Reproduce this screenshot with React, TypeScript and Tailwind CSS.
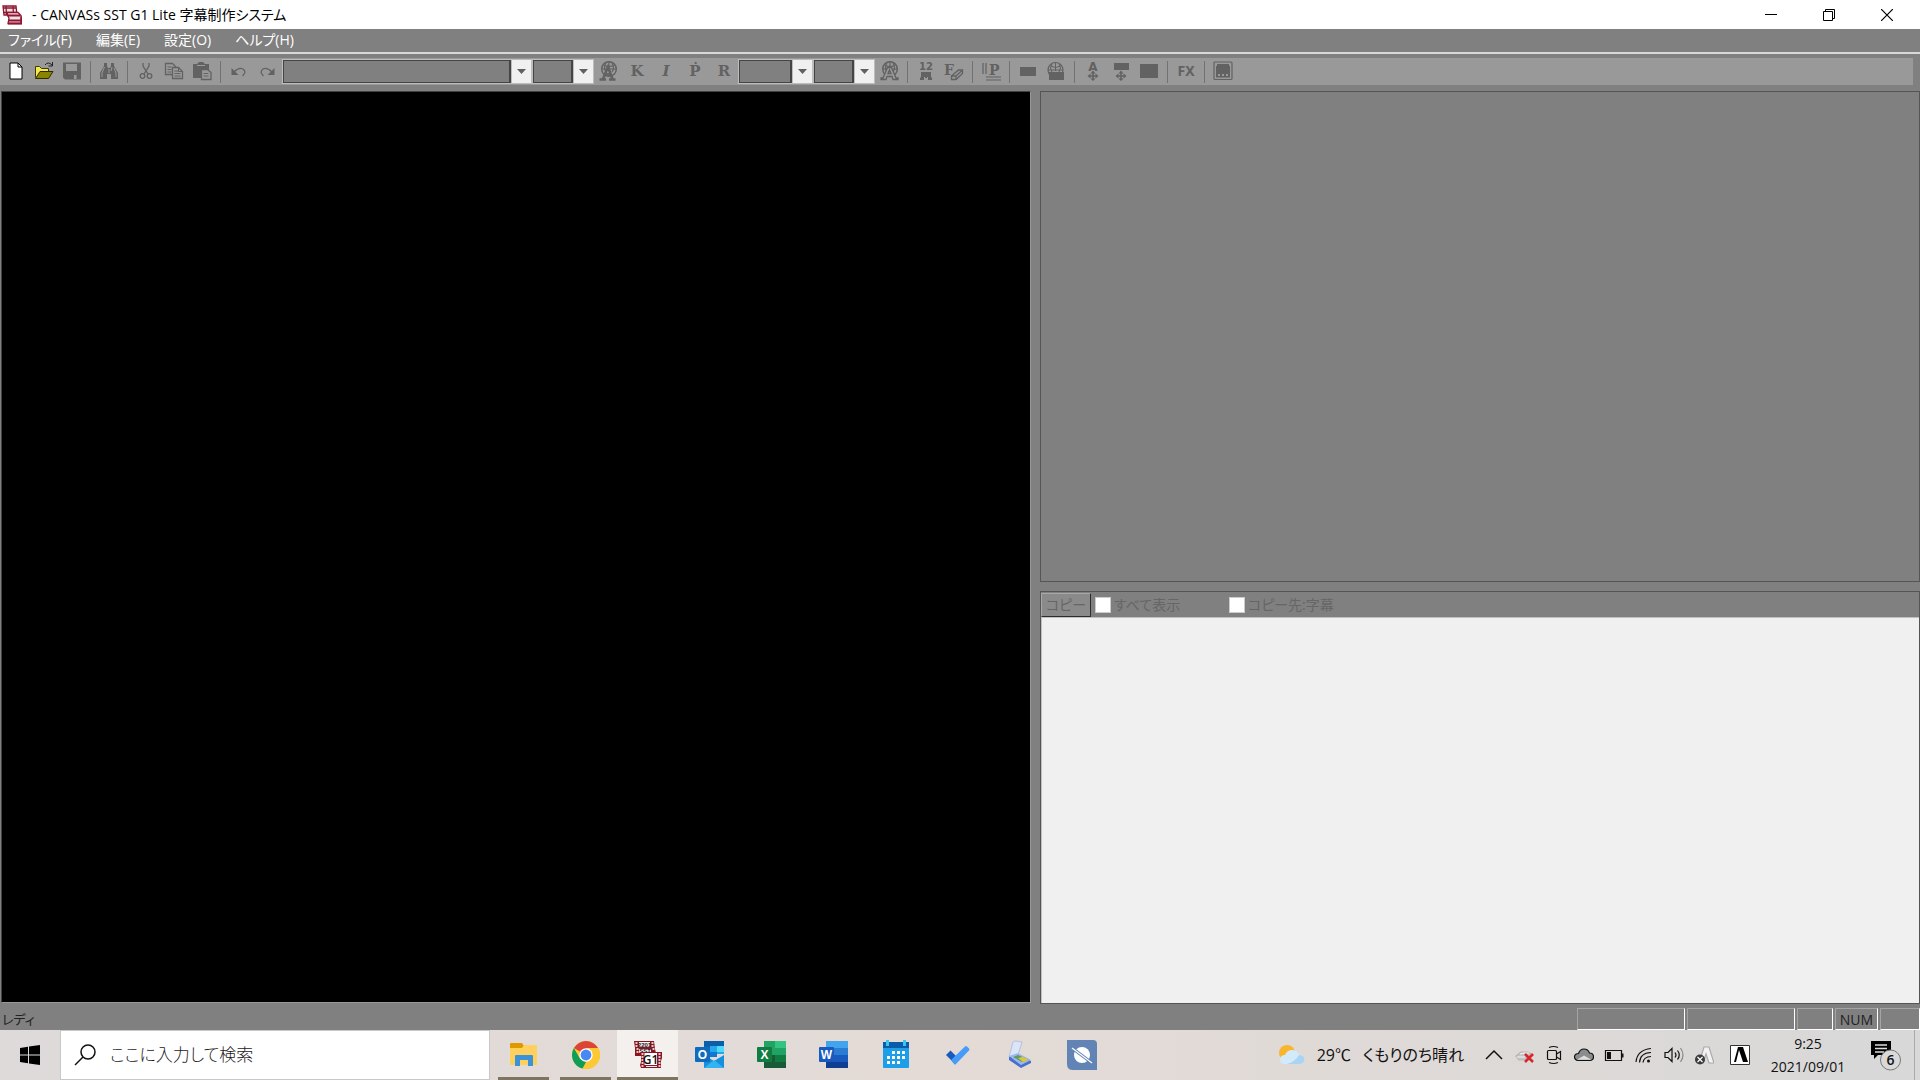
import type { ReactNode } from "react";

const menus = ["ファイル(F)", "編集(E)", "設定(O)", "ヘルプ(H)"];

/* ---------- toolbar pieces ---------- */

function Tool({ label, children }: { label: string; children: ReactNode }) {
  return (
    <button type="button" aria-label={label} className="flex h-6 w-7 shrink-0 items-center justify-center pb-0.5 text-[#626262]">
      {children}
    </button>
  );
}

function Sep() {
  return (
    <div className="flex w-[9px] shrink-0 justify-center">
      <div className="h-[22px] w-px bg-[#727272]" />
    </div>
  );
}

function Combo({ label, width }: { label: string; width: string }) {
  return (
    <div className={`flex h-[25px] shrink-0 border border-[#bdbdbd] bg-[#bdbdbd] ${width}`}>
      <select
        aria-label={label}
        disabled
        className="min-w-0 flex-1 appearance-none border border-r-2 border-[#444] bg-[#808080] opacity-100"
      />
      <span className="ml-px flex w-[19px] items-center justify-center bg-[#f0f0f0]">
        <svg width="9" height="5" viewBox="0 0 9 5" fill="#606060">
          <path d="M0 0h9L4.500 5z" />
        </svg>
      </span>
    </div>
  );
}

function Icon({ children, size = 20 }: { children: ReactNode; size?: number }) {
  return (
    <svg width={size} height={size} viewBox="0 0 20 20" fill="none" stroke="currentColor" strokeWidth="1.500">
      {children}
    </svg>
  );
}

const serif = "'DejaVu Serif', serif";
const sans = "'Liberation Sans', sans-serif";

function Letter({ children, italic }: { children: string; italic?: boolean }) {
  return (
    <span className={`font-['DejaVu_Serif',serif] text-[15px] leading-5 font-bold ${italic ? "italic" : ""}`}>{children}</span>
  );
}

function GlobeA({ solid }: { solid?: boolean }) {
  return (
    <Icon>
      <circle cx="11" cy="8" r="7.300" />
      <path d="M4 8h14M11 1v9M5.500 4q5.500 3 11 0M8 2q-3 5 0 9M14 2q3 5 0 9" strokeWidth="1.200" />
      {solid ? (
        <path d="M5 18l5-12 4.500 12M7 13.500h6M1.500 18.500h6.500M11 18.500h6.500" strokeWidth="2.600" />
      ) : (
        <path d="M2 18.500h5l1-3h5l1 3h5v-1.500h-2L12.500 6.500h-4L4 17H2zM9 12.500l1.500-3.500 1.500 3.500z" fill="#999" strokeWidth="1.300" />
      )}
    </Icon>
  );
}

function Move({ y }: { y: number }) {
  return (
    <path
      d={`M10 ${y - 5.5}l2.500 3h-1.700v1.700h1.700v-1.700L15.500 ${y}l-3 2.500v-1.700h-1.700v1.700h1.700L10 ${y + 5}l-2.500-2.500h1.700v-1.700h-1.700v1.700L4.500 ${y}l3-2.500v1.700h1.700v-1.700h-1.700z`}
      fill="currentColor"
      stroke="none"
    />
  );
}

function Toolbar() {
  return (
    <div className="flex h-[27px] items-center bg-[#999] pl-0.5">
      <Tool label="新規作成">
        <Icon>
          <path d="M4 2h8l4 4v12H4z" fill="#fff" stroke="#000" strokeWidth="1" />
          <path d="M12 2v4h4" stroke="#000" strokeWidth="1" />
        </Icon>
      </Tool>
      <Tool label="開く">
        <Icon>
          <path d="M1.500 16.500v-11h4l2 2h7v3" fill="#f4ea50" stroke="#3c3c00" strokeWidth="1" />
          <path d="M1.500 17.500l4.500-7h13l-4.500 7z" fill="#8a8400" stroke="#2c2c00" strokeWidth="1" />
          <path d="M11 4q3-4 7 0M18.500 1v4h-4" stroke="#222" strokeWidth="1" />
        </Icon>
      </Tool>
      <Tool label="保存">
        <Icon>
          <path d="M1 1.500h18v17H3l-2-2z" fill="currentColor" stroke="none" />
          <path d="M4 3h11v7H4zM12 14h2.500v4H12z" fill="#999" stroke="none" />
        </Icon>
      </Tool>
      <Sep />
      <Tool label="検索">
        <Icon>
          <path d="M5 2h3v3l1 2h2l1-2V2h3v3l4 7v6h-7v-5H8v5H1v-6l4-7z" fill="currentColor" stroke="none" />
          <path d="M5.500 6L3 12v4M13 6l-1 4M15 7l2 5v4M10 8v4" stroke="#999" strokeWidth="1" />
        </Icon>
      </Tool>
      <Sep />
      <Tool label="切り取り">
        <Icon>
          <path d="M7 2v3l5 8M13 2v3l-5 8" strokeWidth="1.300" />
          <circle cx="6.500" cy="15" r="2.300" strokeWidth="1.300" />
          <circle cx="13.500" cy="15" r="2.300" strokeWidth="1.300" />
        </Icon>
      </Tool>
      <Tool label="コピー">
        <Icon>
          <path d="M1.500 2.500h7l3 3v8h-10z" strokeWidth="1.300" />
          <path d="M8.500 6.500h6l4 4v7h-10z" fill="#999" strokeWidth="1.300" />
          <path d="M3.500 6h4M3.500 8.500h4M3.500 11h4M10.500 10h4M10.500 12.500h6M10.500 15h6M14.500 6.500v4h4" strokeWidth="1" />
        </Icon>
      </Tool>
      <Tool label="貼り付け">
        <Icon>
          <path d="M1 3h4l2-2h4l2 2h4v14H1z" fill="currentColor" stroke="none" />
          <path d="M5 4.500h8" stroke="#999" strokeWidth="1" />
          <path d="M9.500 8.500h6l3.500 3v7H9.500z" fill="#999" strokeWidth="1.300" />
          <path d="M11.500 12.500h5M11.500 15h5" strokeWidth="1" />
        </Icon>
      </Tool>
      <Sep />
      <Tool label="元に戻す">
        <Icon>
          <path d="M5 11q5-5 9-3 4 3-.5 7" strokeWidth="1.300" />
          <path d="M2.500 7v7h7z" fill="currentColor" stroke="none" />
        </Icon>
      </Tool>
      <Tool label="やり直し">
        <Icon>
          <path d="M15 11q-5-5-9-3-4 3 .5 7" strokeWidth="1.300" />
          <path d="M17.500 7v7h-7z" fill="currentColor" stroke="none" />
        </Icon>
      </Tool>
      <div className="w-px" />
      <Combo label="フォント" width="w-[250px]" />
      <Combo label="サイズ" width="w-[62px]" />
      <div className="flex gap-px">
        <Tool label="文字色">
          <GlobeA solid />
        </Tool>
        <Tool label="太字">
          <Letter>K</Letter>
        </Tool>
        <Tool label="斜体">
          <Letter italic>I</Letter>
        </Tool>
        <Tool label="傍点">
          <Letter>Ṗ</Letter>
        </Tool>
        <Tool label="ルビ">
          <Letter>R</Letter>
        </Tool>
      </div>
      <Combo label="縁の種類" width="w-[75px]" />
      <Combo label="縁の幅" width="w-[62px]" />
      <Tool label="縁の色">
        <GlobeA />
      </Tool>
      <Sep />
      <Tool label="縦中横">
        <Icon>
          <text x="10" y="9" textAnchor="middle" fontSize="10" fontWeight="700" fontFamily="DejaVu Sans, sans-serif" fill="currentColor" stroke="none">12</text>
          <path d="M5 11h10v5l1 1v2h-4v-3h-1v1H9v-1H8v3H4v-2l1-1z" fill="currentColor" stroke="none" />
        </Icon>
      </Tool>
      <Tool label="書式消去">
        <Icon>
          <text x="0" y="14" fontSize="14" fontWeight="700" fontFamily={serif} fill="currentColor" stroke="none">F</text>
          <path d="M7.500 15l7-6h4v3.500l-6.500 6H7.500z" fill="#999" strokeWidth="1.400" />
          <path d="M7.500 15H12v3.500M12 15l6.500-6" strokeWidth="1.300" />
        </Icon>
      </Tool>
      <Sep />
      <Tool label="文字配置">
        <Icon>
          <path d="M2 2v11M5 2v11M5 16h15M5 19h15" strokeWidth="1.200" />
          <text x="8" y="14" fontSize="14" fontWeight="700" fontFamily={serif} fill="currentColor" stroke="none">P</text>
        </Icon>
      </Tool>
      <Sep />
      <Tool label="座布団">
        <Icon>
          <path d="M2 6h16v9H2z" fill="currentColor" stroke="none" />
        </Icon>
      </Tool>
      <Tool label="座布団の色">
        <Icon>
          <circle cx="9.500" cy="9" r="7.500" strokeWidth="1.200" />
          <path d="M2 9h15M9.500 1v9M4 5q6 3 11 0M6 3q-3 4 0 8M13 3q3 4 0 8" strokeWidth="1" />
          <path d="M3 11h15v8H3z" fill="currentColor" stroke="none" />
        </Icon>
      </Tool>
      <Sep />
      <Tool label="文字移動">
        <Icon>
          <text x="10" y="10" textAnchor="middle" fontSize="12" fontWeight="700" fontFamily="DejaVu Sans, sans-serif" fill="currentColor" stroke="none">A</text>
          <Move y={15} />
        </Icon>
      </Tool>
      <Tool label="座布団移動">
        <Icon>
          <path d="M3 2h15v7H3z" fill="currentColor" stroke="none" />
          <Move y={15} />
        </Icon>
      </Tool>
      <Tool label="画面枠">
        <Icon>
          <path d="M1 3h18v14H1z" fill="currentColor" stroke="none" />
        </Icon>
      </Tool>
      <Sep />
      <Tool label="効果">
        <span className="font-['Noto_Sans',sans-serif] text-[14px] leading-5 font-bold">FX</span>
      </Tool>
      <Sep />
      <Tool label="安全枠">
        <Icon>
          <rect x="1" y="1" width="18" height="17.500" rx="1" strokeWidth="1.200" />
          <path d="M4 3h12v2h1v10h-2v-2h-2v2h-2v-2H9v2H7v-2H5v2H3V5h1zM3 15h14v1.500H3z" fill="currentColor" stroke="none" />
        </Icon>
      </Tool>
    </div>
  );
}

/* ---------- film logos ---------- */

function FilmLogo() {
  return (
    <svg width="20" height="20" viewBox="0 0 20 20" fill="none" stroke="#8f1731" strokeWidth="1.300">
      <path d="M1 1h13l1 9H2z" fill="#f0dfe3" />
      <path d="M1 3h13M1 7.500h14M4 1l.5 9M11 1l.5 9" />
      <path d="M5 7.500h11l3 3v8H6l1-5z" fill="#f0dfe3" />
      <path d="M5 10.500h13M6 15.500h13M6 18.500h13.500v-7" strokeWidth="1.800" />
    </svg>
  );
}

function G1Icon() {
  return (
    <svg width="30" height="30" viewBox="0 0 30 30">
      <path d="M1 1h20l1 8 1 4-7 3H2V8z" fill="#8d1420" />
      <path d="M6 2h11v5H6zM6 9h12v4H6z" fill="#f2f2f2" />
      <path d="M2.500 3h2M2.500 6h2M3.500 9h2M3.500 12h2M18.500 3h2M18.500 6h2M19.500 9h2" stroke="#fff" strokeWidth="1.500" />
      <text x="11.500" y="7" textAnchor="middle" fontSize="6" fontWeight="700" fontFamily={sans} fill="#222">2201</text>
      <text x="12" y="13" textAnchor="middle" fontSize="6" fontWeight="700" fontFamily={sans} fill="#222">SST</text>
      <path d="M8 12h21v6l-1 3v7H8l-1-3 1-3z" fill="#8d1420" />
      <path d="M11.500 13h12.500v12H11.500z" fill="#fff" />
      <path d="M13 26.500h11" stroke="#eee" />
      <path d="M8.500 14h2M8.500 17h2M8.500 20h2M8.500 23h2M8.500 26h2M25.500 14h2M25.500 17h2M25.500 20h2M25.500 23h2M25.500 26h2" stroke="#fff" strokeWidth="1.500" />
      <text x="17.500" y="24" textAnchor="middle" fontSize="12" fontFamily="Open Sans, sans-serif" fontWeight="600" fill="#111">G1</text>
    </svg>
  );
}

/* ---------- taskbar apps ---------- */

function ExplorerIcon() {
  return (
    <svg width="30" height="30" viewBox="0 0 30 30">
      <path d="M1 4q0-1 1-1h11l2 3v5H1z" fill="#e09a00" />
      <path d="M1 8h12l2-3h12q1 0 1 1v18q0 1-1 1H2q-1 0-1-1z" fill="#fdd15c" />
      <path d="M6 26V16q0-1 1-1h16q1 0 1 1v10h-5v-6h-8v6z" fill="#3a93d8" />
    </svg>
  );
}

function ChromeIcon() {
  return (
    <svg width="30" height="30" viewBox="0 0 30 30">
      <circle cx="15" cy="15" r="14" fill="#fcc934" />
      <path d="M15 15L2.900 8A14 14 0 0 1 27.100 8z" fill="#db4437" />
      <path d="M2.900 8l6 10.500L15 22l-3.500 6.600A14 14 0 0 1 2.900 8z" fill="#109d58" />
      <path d="M15 8h12.100A14 14 0 0 1 12 28.700L21 18.500z" fill="#fcc934" />
      <circle cx="15" cy="15" r="6.700" fill="#fff" />
      <circle cx="15" cy="15" r="5.400" fill="#4688f4" />
    </svg>
  );
}

function OutlookIcon() {
  return (
    <svg width="30" height="30" viewBox="0 0 30 30">
      <path d="M9 1h20v13H9z" fill="#28a8ea" />
      <path d="M9 1h20v5H9z" fill="#0a5fa8" />
      <path d="M9 6h6v9H9z" fill="#0364b8" />
      <path d="M22 6h7v6h-7z" fill="#50d9ff" />
      <path d="M15 12h7v5h-7z" fill="#0f78d4" />
      <path d="M9 15l10 6 10-6v13H9z" fill="#1490df" />
      <path d="M9 28l10-8 10 8z" fill="#33b3f0" />
      <rect x="0" y="7" width="15" height="15" rx="1" fill="#0f6cbd" />
      <text x="7.500" y="19" textAnchor="middle" fontSize="12" fontWeight="700" fontFamily={sans} fill="#fff">O</text>
    </svg>
  );
}

function ExcelIcon() {
  return (
    <svg width="30" height="30" viewBox="0 0 30 30">
      <path d="M7 1h11v14H7z" fill="#21a366" />
      <path d="M18 1h11v7H18z" fill="#33c481" />
      <path d="M18 8h11v7H18z" fill="#21a366" />
      <path d="M7 15h11v13H7z" fill="#185c37" />
      <path d="M18 15h11v7H18z" fill="#107c41" />
      <path d="M18 22h11v6H18z" fill="#185c37" />
      <rect x="0" y="7" width="15" height="15" rx="1" fill="#107c41" />
      <text x="7.500" y="19" textAnchor="middle" fontSize="12" fontWeight="700" fontFamily={sans} fill="#fff">X</text>
    </svg>
  );
}

function WordIcon() {
  return (
    <svg width="30" height="30" viewBox="0 0 30 30">
      <path d="M7 1h22v7H7z" fill="#41a5ee" />
      <path d="M7 8h22v7H7z" fill="#2b7cd3" />
      <path d="M7 15h22v7H7z" fill="#185abd" />
      <path d="M7 22h22v6H7z" fill="#103f91" />
      <rect x="0" y="7" width="15" height="15" rx="1" fill="#185abd" />
      <text x="7.500" y="19" textAnchor="middle" fontSize="12" fontWeight="700" fontFamily={sans} fill="#fff">W</text>
    </svg>
  );
}

function CalendarIcon() {
  return (
    <svg width="30" height="30" viewBox="0 0 30 30">
      <path d="M2 8h26v19q0 1-1 1H3q-1 0-1-1z" fill="#1c9fe8" />
      <path d="M2 2h26v6H2z" fill="#0a5ca8" />
      <path d="M5 0h3v6H5zM22 0h3v6h-3z" fill="#38c6f0" />
      <path d="M11 11h3v3h-3zM16 11h3v3h-3zM21 11h3v3h-3zM6 16h3v3H6zM11 16h3v3h-3zM16 16h3v3h-3zM21 16h3v3h-3zM6 21h3v3H6zM11 21h3v3h-3zM16 21h3v3h-3z" fill="#fff" />
    </svg>
  );
}

function TodoIcon() {
  return (
    <svg width="30" height="30" viewBox="0 0 30 30">
      <path d="M3 15l4.500-4.500 8 8L12 24z" fill="#185abd" />
      <path d="M8 20L22 6.500q1-1 2 0l2 2q1 1 0 2L13 24q-1 1-2 0z" fill="#469cf8" />
    </svg>
  );
}

function ScannerIcon() {
  return (
    <svg width="30" height="30" viewBox="0 0 30 30">
      <path d="M8 2q1-1 3-1l6 1-4 13-9 2z" fill="#dbe5f8" stroke="#b3c1e0" />
      <path d="M4 17l9-3 13 7v2l-10 5L4 20z" fill="#4a6fce" />
      <path d="M4 16l9-3 13 7-10 5z" fill="#9db8ef" />
      <path d="M8 17l5-2 11 5-7 2z" fill="#5f9a6a" />
      <path d="M13 18l5-1 6 3-6 2z" fill="#d9c93a" />
    </svg>
  );
}

function PlanetIcon() {
  return (
    <svg width="30" height="30" viewBox="0 0 30 30">
      <path d="M0 0h26q4 0 4 4v26H6q-6 0-6-6z" fill="#6284b5" />
      <circle cx="15" cy="15" r="8" fill="#fff" />
      <path d="M5 8l20 15" stroke="#6284b5" strokeWidth="3" />
      <path d="M5 8l20 15" stroke="#fff" strokeWidth="1.200" />
    </svg>
  );
}

const apps = [
  { name: "エクスプローラー", icon: <ExplorerIcon />, state: "open" },
  { name: "Google Chrome", icon: <ChromeIcon />, state: "open" },
  { name: "CANVASs SST G1 Lite", icon: <G1Icon />, state: "active" },
  { name: "Outlook", icon: <OutlookIcon />, state: "" },
  { name: "Excel", icon: <ExcelIcon />, state: "" },
  { name: "Word", icon: <WordIcon />, state: "" },
  { name: "カレンダー", icon: <CalendarIcon />, state: "" },
  { name: "To Do", icon: <TodoIcon />, state: "" },
  { name: "スキャナー", icon: <ScannerIcon />, state: "" },
  { name: "ブラウザー", icon: <PlanetIcon />, state: "" },
];

const tray = [
  {
    name: "隠れているインジケーター",
    icon: <path d="M2 14l8-8 8 8" strokeWidth="1.500" />,
  },
  {
    name: "ドライブ",
    icon: (
      <>
        <path d="M2 11l5-4h7l5 3-5 5H5z" fill="#c4c4c4" stroke="#b5b5b5" />
        <path d="M6 9l4-1h5M3 12h8" stroke="#f4f4f4" />
        <path d="M11 9l8 8M19 9l-8 8" stroke="#d8272b" strokeWidth="2.500" />
      </>
    ),
  },
  {
    name: "会議",
    icon: (
      <>
        <rect x="3.500" y="5.500" width="9" height="9" rx="1" />
        <path d="M12.500 9l4-2.500v8l-4-2.500M5 2.500q4.500-2 9 0M5 17.500q4.500 2 9 0" />
      </>
    ),
  },
  {
    name: "OneDrive",
    icon: (
      <>
        <path d="M4 15.500q-3.500-.5-3.500-4 .5-3 4-3Q6 4 10 4q4 0 5.500 4 4 0 4 4 0 3-3.500 3.500z" fill="#8c8c8c" />
        <path d="M3 14.800l7-4.300 7.500 4.300z" fill="#ddd" stroke="none" />
      </>
    ),
  },
  {
    name: "バッテリー",
    icon: (
      <>
        <path d="M1.500 5.500h16v10h-16z" />
        <path d="M3 7h4v7H3zM18 8.500h1.500v4H18z" fill="#111" stroke="none" />
      </>
    ),
  },
  {
    name: "Wi-Fi",
    icon: (
      <>
        <path d="M2 17Q3 5 17 3.500M5.500 17.500Q6 8 17 7.500M9 17.500Q9.500 12 17 11.500" />
        <circle cx="14.500" cy="16" r="1.500" fill="#111" stroke="none" />
      </>
    ),
  },
  {
    name: "音量",
    icon: (
      <>
        <path d="M1 7.500h3l4-4v13l-4-4H1zM11 7.500q2 2.500 0 5M13.500 5.500q3.500 4.500 0 9" />
        <path d="M16.500 3q5 7 0 14" stroke="#888" />
      </>
    ),
  },
  {
    name: "入力オプション",
    icon: (
      <>
        <path d="M10 2h5l5 16h-5l-3-9-3 9H5z" fill="#f2f2f2" stroke="#aaa" />
        <circle cx="6" cy="14.500" r="5" fill="#3c3c3c" stroke="none" />
        <path d="M3.500 12l5 5M8.500 12l-5 5" stroke="#fff" />
      </>
    ),
  },
];

function Taskbar() {
  return (
    <footer className="flex h-[50px] items-stretch bg-linear-to-r from-[#dedada] via-[#e4dbd6] to-[#d8d8d8] text-[#111]">
      <button type="button" aria-label="スタート" className="flex w-[60px] items-center justify-center">
        <svg width="20" height="20" viewBox="0 0 20 20" fill="#000">
          <path d="M0 3l8-1.200V9.500H0zM9 1.600L20 0v9.500H9zM0 10.500h8v7.700L0 17zM9 10.500h11V20L9 18.400z" />
        </svg>
      </button>
      <div className="flex w-[430px] items-center border border-[#c8c8c8] bg-white pl-3">
        <label htmlFor="search" aria-label="検索">
          <svg width="24" height="24" viewBox="0 0 24 24" fill="none" stroke="#111" strokeWidth="1.500">
            <circle cx="15" cy="9" r="7" />
            <path d="M10 14l-8 8" />
          </svg>
        </label>
        <input
          id="search"
          type="text"
          placeholder="ここに入力して検索"
          className="ml-[13px] min-w-0 flex-1 text-[17px] font-light outline-none placeholder:text-[#1b1b1b]"
        />
      </div>

      <nav className="flex gap-px pl-[3px]" aria-label="タスクバー">
        {apps.map((app) => (
          <button
            key={app.name}
            type="button"
            aria-label={app.name}
            className={`flex w-[61px] flex-col items-center ${app.state === "active" ? "bg-[#f4f0ee]" : ""}`}
          >
            <span className="flex flex-1 items-center pt-[3px]">{app.icon}</span>
            {app.state === "open" && <span className="h-[3px] w-[51px] bg-[#7d7560]" />}
            {app.state === "active" && <span className="h-[3px] w-full bg-[#7d7560]" />}
            {app.state === "" && <span className="h-[3px]" />}
          </button>
        ))}
      </nav>

      <div className="ml-auto flex items-center">
        <button type="button" className="flex items-center gap-3 pr-3 text-[16px] whitespace-nowrap">
          <svg width="26" height="20" viewBox="0 0 26 20">
            <circle cx="8" cy="8" r="8" fill="#f9b52b" />
            <path d="M5 19q-4-.5-4-5 .5-4 5-4 2-5 7-5 5 0 6.500 4.500Q25 9.500 25.500 14q0 4.500-5 5z" fill="#d3eafa" />
            <path d="M8 19q8-2 12-9 5 0 5.500 4 0 4.500-5 5z" fill="#a9d4f4" />
          </svg>
          <span>29℃</span>
          <span>くもりのち晴れ</span>
        </button>
        <div className="flex gap-[10px] pl-2">
          {tray.map((item) => (
            <button key={item.name} type="button" aria-label={item.name} className="h-5 w-5">
              <svg width="20" height="20" viewBox="0 0 20 20" fill="none" stroke="#111" strokeWidth="1.200">
                {item.icon}
              </svg>
            </button>
          ))}
        </div>
        <button type="button" aria-label="入力モード" className="ml-4 h-5 w-5">
          <svg width="20" height="20" viewBox="0 0 20 20">
            <path d="M.5.5h19v19H.5z" fill="#fff" stroke="#333" />
            <path d="M8 2h5l5 15h-5L9 5l-3 12H4z" fill="#000" />
          </svg>
        </button>
        <div className="flex w-[116px] flex-col items-center text-[14px] leading-[23px]">
          <time>9:25</time>
          <time>2021/09/01</time>
        </div>
        <button type="button" aria-label="通知 6 件" className="mr-3 ml-1 flex w-8 justify-center">
          <svg width="32" height="32" viewBox="0 0 32 32">
            <path d="M1 2h20v14H8l-4 4v-4H1z" fill="#000" />
            <path d="M5 6h12M5 9.500h12M5 13h9" stroke="#ddd" strokeWidth="1.300" />
            <circle cx="20.500" cy="21" r="10" fill="#d9d9d9" stroke="#777" />
            <text x="20.500" y="26" textAnchor="middle" fontSize="14" fontFamily="Open Sans, sans-serif" fontWeight="600" fill="#111">6</text>
          </svg>
        </button>
        <div className="h-[50px] w-[6px] border-l border-[#aaa]" />
      </div>
    </footer>
  );
}

/* ---------- app window ---------- */

function StatusPane({ width, children }: { width: string; children?: ReactNode }) {
  return (
    <div className={`flex h-[22px] items-center justify-center border border-t-[#a4a4a4] border-r-white border-b-white border-l-[#a4a4a4] ${width}`}>
      {children}
    </div>
  );
}

export default function App() {
  return (
    <div className="flex min-h-screen flex-col bg-[#808080] font-['Open_Sans','Noto_Sans_CJK_JP',sans-serif] [font-feature-settings:'palt']">
      <header className="flex h-[29px] items-center bg-white pl-[2px] text-black">
        <FilmLogo />
        <h1 className="ml-[10px] flex-1 text-[14px] leading-5">- CANVASs SST G1 Lite 字幕制作システム</h1>
        <button type="button" aria-label="最小化" className="flex h-full w-[58px] items-center justify-center">
          <svg width="12" height="12" viewBox="0 0 12 12" stroke="#000">
            <path d="M0 5.500h12" />
          </svg>
        </button>
        <button type="button" aria-label="元のサイズに戻す" className="flex h-full w-[58px] items-center justify-center">
          <svg width="12" height="12" viewBox="0 0 12 12" fill="none" stroke="#000">
            <path d="M.5 2.500h9v9h-9zM2.500 2.500v-2h9v9h-2" />
          </svg>
        </button>
        <button type="button" aria-label="閉じる" className="mr-1 flex h-full w-[58px] items-center justify-center">
          <svg width="12" height="12" viewBox="0 0 12 12" stroke="#000" strokeWidth="1.200">
            <path d="M0 0l12 12M12 0L0 12" />
          </svg>
        </button>
      </header>

      <nav className="flex h-[25px] items-start gap-6 border-b-2 border-[#d8d8d8] pl-2 text-[14px] leading-[22px] text-white">
        {menus.map((m) => (
          <button key={m} type="button">
            {m}
          </button>
        ))}
      </nav>

      <div className="pt-1 pr-[7px] pb-[6px]">
        <Toolbar />
      </div>

      <main className="grid flex-1 grid-cols-[1031fr_880fr] gap-x-[9px]">
        <section aria-label="映像" className="mb-px ml-px border border-[#444] border-r-[#999] border-b-[#999] bg-black" />
        <div className="grid grid-rows-[491fr_413fr] gap-y-[9px]">
          <section aria-label="プレビュー" className="border border-[#555] bg-[#808080]" />
          <section aria-label="字幕一覧" className="flex flex-col border border-[#555]">
            <div className="flex h-[25px] items-center text-[14px] text-[#666]">
              <button
                type="button"
                disabled
                className="h-6 w-[50px] border border-t-[#a8a8a8] border-r-[#2c2c2c] border-b-[#2c2c2c] border-l-[#a8a8a8] bg-[#8a8a8a] leading-5"
              >
                コピー
              </button>
              <label className="ml-1 flex w-[134px] items-center gap-[3px]">
                <input type="checkbox" disabled className="h-4 w-4 appearance-none border border-[#ccc] bg-white" />
                すべて表示
              </label>
              <label className="flex items-center gap-[3px]">
                <input type="checkbox" disabled className="h-4 w-4 appearance-none border border-[#ccc] bg-white" />
                コピー先:字幕
              </label>
            </div>
            <div className="flex-1 border-t border-l border-[#c0c0c0] bg-[#f0f0f0]" />
          </section>
        </div>
      </main>

      <div className="flex h-[26px] items-end gap-[2px] text-[14px] text-[#222]">
        <span className="flex-1 pl-[2px] text-[13px] leading-[22px]">レディ</span>
        <StatusPane width="w-[108px]" />
        <StatusPane width="w-[108px]" />
        <StatusPane width="w-9" />
        <StatusPane width="w-[43px]">NUM</StatusPane>
        <StatusPane width="w-10" />
      </div>

      <Taskbar />
    </div>
  );
}
